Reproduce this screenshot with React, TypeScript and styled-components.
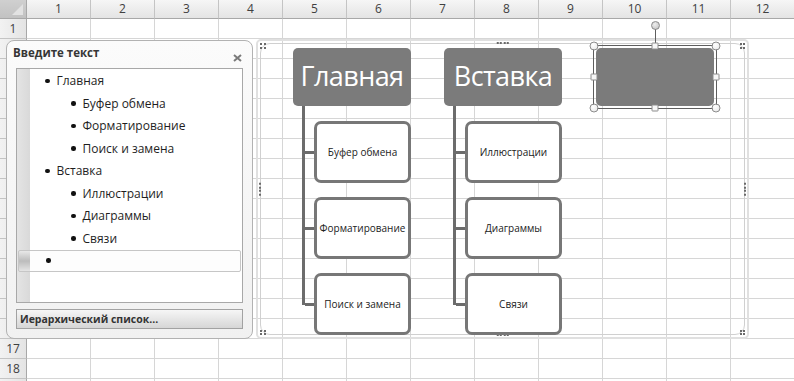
import React from 'react';
import styled, { createGlobalStyle } from 'styled-components';

const GlobalStyle = createGlobalStyle`
  html, body {
    margin: 0;
    padding: 0;
    background: #fff;
  }
  body {
    font-family: 'Open Sans', 'Noto Sans', 'Liberation Sans', sans-serif;
    overflow: hidden;
  }
  * {
    box-sizing: border-box;
  }
`;

const COLS = 12;
const ROWS = 19;

const Sheet = styled.div`
  position: relative;
  width: 794px;
  height: 381px;
  overflow: hidden;
  background: #fff;
`;

const Grid = styled.div`
  display: grid;
  grid-template-columns: 27px repeat(${COLS}, 64px);
  grid-template-rows: 19px repeat(${ROWS}, 20px);
`;

const Corner = styled.div`
  position: relative;
  background: linear-gradient(#d0d0d0, #c2c2c2);
  border-right: 1px solid #a8a8a8;
  border-bottom: 1px solid #a8a8a8;
  &::after {
    content: '';
    position: absolute;
    right: 3px;
    bottom: 3px;
    border-left: 11px solid transparent;
    border-bottom: 11px solid #e2e2e2;
  }
`;

const ColHeader = styled.div`
  background: linear-gradient(#f6f6f6, #e4e4e4);
  border-right: 1px solid #c4c4c4;
  border-bottom: 1px solid #a8a8a8;
  color: #404040;
  font-size: 12px;
  line-height: 18px;
  text-align: center;
`;

const RowHeader = styled.div`
  background: linear-gradient(to right, #f2f2f2, #e4e4e4);
  border-right: 1px solid #a8a8a8;
  border-bottom: 1px solid #c4c4c4;
  color: #404040;
  font-size: 12px;
  line-height: 19px;
  text-align: center;
  overflow: hidden;
`;

const Cell = styled.div`
  border-right: 1px solid #d6d6d6;
  border-bottom: 1px solid #d6d6d6;
`;

/* ---------- text pane ---------- */

const TextPane = styled.div`
  position: absolute;
  left: 6px;
  top: 40px;
  width: 247px;
  height: 299px;
  border: 1px solid #b2b2b2;
  border-radius: 8px;
  background: linear-gradient(#fbfbfb, #f1f1f1);
  padding: 0 9px 9px 9px;
  display: flex;
  flex-direction: column;
`;

const PaneHeader = styled.div`
  height: 27px;
  display: flex;
  justify-content: space-between;
  align-items: flex-start;
`;

const PaneTitle = styled.div`
  margin: 5px 0 0 -3px;
  font-size: 11.5px;
  font-weight: 700;
  color: #363636;
  line-height: 14px;
`;

const CloseIcon = styled.svg`
  margin-top: 13px;
  margin-right: 1px;
`;

const ListBox = styled.div`
  flex: 1;
  border: 1px solid #a8a8a8;
  background: linear-gradient(to right, #e4e4e4 0, #d9d9d9 13px, #fff 13px);
  padding-top: 0.5px;
`;

const Item = styled.div<{ $level: number; $active?: boolean }>`
  height: 22.5px;
  display: flex;
  align-items: center;
  gap: 7px;
  padding-left: ${(p) => (p.$level === 1 ? 28 : 54)}px;
  font-size: 12px;
  color: #1e1e1e;
  ${(p) =>
    p.$active &&
    `
    margin: 0 1px;
    height: 22px;
    padding-left: 27px;
    border: 1px solid #c6c6c6;
    border-radius: 2px;
    background:
      linear-gradient(to right, transparent 11px, #fdfdfd 11px),
      linear-gradient(#e8e8e8, #bcbcbc 50%, #e4e4e4);
  `}
`;

const Bullet = styled.span`
  width: 4.5px;
  height: 4.5px;
  border-radius: 50%;
  background: #111;
  flex-shrink: 0;
`;

const PaneFooter = styled.div`
  margin-top: 6px;
  height: 20px;
  border: 1px solid #a2a2a2;
  background: linear-gradient(#f6f6f6, #e6e6e6 50%, #d6d6d6);
  font-size: 10.5px;
  font-weight: 700;
  color: #333;
  line-height: 18px;
  padding-left: 3px;
`;

/* ---------- smartart frame ---------- */

const Frame = styled.div`
  position: absolute;
  left: 256px;
  top: 39px;
  width: 493px;
  height: 300px;
  border: 2px solid #e0e0e0;
  border-radius: 5px;
  &::before {
    content: '';
    position: absolute;
    inset: 2px;
    border: 1px solid #d0d0d0;
    border-radius: 10px;
    pointer-events: none;
  }
`;

const Grip = styled.span<{ $pos: string }>`
  position: absolute;
  display: grid;
  gap: 1.5px;
  ${(p) => {
    switch (p.$pos) {
      case 'top':
        return 'top: 1px; left: 50%; transform: translateX(-50%); grid-template-columns: repeat(4, 2px);';
      case 'bottom':
        return 'bottom: 1px; left: 50%; transform: translateX(-50%); grid-template-columns: repeat(4, 2px);';
      case 'left':
        return 'left: 1px; top: 50%; transform: translateY(-50%); grid-template-rows: repeat(4, 2px);';
      case 'right':
        return 'right: 1px; top: 50%; transform: translateY(-50%); grid-template-rows: repeat(4, 2px);';
      case 'tl':
        return 'top: 2px; left: 2px; grid-template-columns: repeat(2, 2px);';
      case 'tr':
        return 'top: 2px; right: 2px; grid-template-columns: repeat(2, 2px);';
      case 'bl':
        return 'bottom: 2px; left: 2px; grid-template-columns: repeat(2, 2px);';
      default:
        return 'bottom: 2px; right: 2px; grid-template-columns: repeat(2, 2px);';
    }
  }}
  i {
    display: block;
    width: 2px;
    height: 2px;
    background: #6a6a6a;
  }
`;

const Diagram = styled.div`
  display: flex;
  align-items: flex-start;
  gap: 33px;
  padding: 7px 0 0 35px;
`;

const Group = styled.div`
  width: 118px;
  display: flex;
  flex-direction: column;
`;

const MainBox = styled.div`
  width: 118px;
  height: 58px;
  border-radius: 5px;
  background: #7b7b7b;
  color: #fff;
  font-size: 27px;
  display: flex;
  align-items: center;
  justify-content: center;
  padding-bottom: 4px;
  letter-spacing: -0.6px;
`;

const Children = styled.div`
  position: relative;
  display: flex;
  flex-direction: column;
  gap: 14px;
  padding: 15px 0 0 21px;
  &::before {
    content: '';
    position: absolute;
    left: 9px;
    top: 0;
    bottom: 30px;
    width: 3px;
    background: #6c6c6c;
  }
`;

const ChildBox = styled.div`
  position: relative;
  width: 97px;
  height: 62px;
  border: 3px solid #777;
  border-radius: 7px;
  background: #fff;
  font-size: 10px;
  color: #222;
  display: flex;
  align-items: center;
  justify-content: center;
  &::before {
    content: '';
    position: absolute;
    left: -12px;
    top: 50%;
    width: 9px;
    height: 3px;
    margin-top: -1.5px;
    background: #6c6c6c;
  }
`;

const Selected = styled.div`
  position: relative;
  margin-left: 1px;
`;

const SelectionBox = styled.div`
  position: absolute;
  inset: -3px;
  border: 1px solid #5e5e5e;
`;

const Handle = styled.span<{ $x: string; $y: string; $round?: boolean }>`
  position: absolute;
  left: ${(p) => p.$x};
  top: ${(p) => p.$y};
  width: ${(p) => (p.$round ? 9 : 7)}px;
  height: ${(p) => (p.$round ? 9 : 7)}px;
  transform: translate(-50%, -50%);
  border: 1px solid #8c8c8c;
  border-radius: ${(p) => (p.$round ? '50%' : '1px')};
  background: ${(p) => (p.$round ? 'radial-gradient(circle at 40% 35%, #fff, #e4e4e4)' : '#f7f7f7')};
`;

const RotateStem = styled.span`
  position: absolute;
  left: 50%;
  top: -21px;
  width: 1px;
  height: 21px;
  background: #5e5e5e;
`;

const RotateKnob = styled.span`
  position: absolute;
  left: 50%;
  top: -25px;
  width: 9px;
  height: 9px;
  transform: translateX(-4px);
  border-radius: 50%;
  border: 1px solid #8a8a8a;
  background: radial-gradient(circle at 40% 35%, #eee, #bdbdbd);
`;

const outline = [
  { level: 1, text: 'Главная' },
  { level: 2, text: 'Буфер обмена' },
  { level: 2, text: 'Форматирование' },
  { level: 2, text: 'Поиск и замена' },
  { level: 1, text: 'Вставка' },
  { level: 2, text: 'Иллюстрации' },
  { level: 2, text: 'Диаграммы' },
  { level: 2, text: 'Связи' },
];

const groups = [
  { title: 'Главная', items: ['Буфер обмена', 'Форматирование', 'Поиск и замена'] },
  { title: 'Вставка', items: ['Иллюстрации', 'Диаграммы', 'Связи'] },
];

const Dots = ({ pos }: { pos: string }) => (
  <Grip $pos={pos}>
    {Array.from({ length: 4 }, (_, i) => (
      <i key={i} />
    ))}
  </Grip>
);

const App = () => {
  return (
    <Sheet>
      <GlobalStyle />
      <Grid>
        <Corner />
        {Array.from({ length: COLS }, (_, c) => (
          <ColHeader key={c}>{c + 1}</ColHeader>
        ))}
        {Array.from({ length: ROWS }, (_, r) => (
          <React.Fragment key={r}>
            <RowHeader>{r + 1}</RowHeader>
            {Array.from({ length: COLS }, (_, c) => (
              <Cell key={c} />
            ))}
          </React.Fragment>
        ))}
      </Grid>

      <TextPane>
        <PaneHeader>
          <PaneTitle>Введите текст</PaneTitle>
          <CloseIcon width="9" height="8" viewBox="0 0 9 8">
            <path d="M1 1 L8 7 M8 1 L1 7" stroke="#7a7a7a" strokeWidth="2" />
          </CloseIcon>
        </PaneHeader>
        <ListBox>
          {outline.map((row, i) => (
            <Item key={i} $level={row.level}>
              <Bullet />
              {row.text}
            </Item>
          ))}
          <Item $level={1} $active>
            <Bullet />
          </Item>
        </ListBox>
        <PaneFooter>Иерархический список...</PaneFooter>
      </TextPane>

      <Frame>
        {['top', 'bottom', 'left', 'right', 'tl', 'tr', 'bl', 'br'].map((p) => (
          <Dots key={p} pos={p} />
        ))}
        <Diagram>
          {groups.map((g) => (
            <Group key={g.title}>
              <MainBox>{g.title}</MainBox>
              <Children>
                {g.items.map((t) => (
                  <ChildBox key={t}>{t}</ChildBox>
                ))}
              </Children>
            </Group>
          ))}
          <Selected>
            <MainBox />
            <SelectionBox>
              <RotateStem />
              <RotateKnob />
              <Handle $x="0" $y="0" $round />
              <Handle $x="100%" $y="0" $round />
              <Handle $x="0" $y="100%" $round />
              <Handle $x="100%" $y="100%" $round />
              <Handle $x="50%" $y="0" />
              <Handle $x="50%" $y="100%" />
              <Handle $x="0" $y="50%" />
              <Handle $x="100%" $y="50%" />
            </SelectionBox>
          </Selected>
        </Diagram>
      </Frame>
    </Sheet>
  );
};

export default App;
